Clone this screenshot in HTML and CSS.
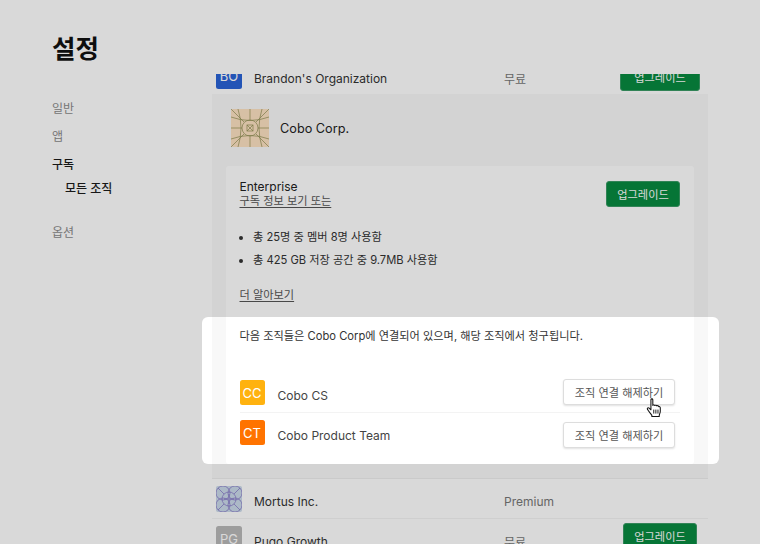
FILE: index.html
```html
<!DOCTYPE html>
<html lang="ko">
<head>
<meta charset="utf-8">
<title>설정</title>
<link rel="stylesheet" href="styles.css">
</head>
<body>
<div class="page">
  <aside class="sidebar">
    <h1 class="title">설정</h1>
    <nav class="nav">
      <a class="nav-item">일반</a>
      <a class="nav-item">앱</a>
      <a class="nav-item active">구독</a>
      <a class="nav-sub">모든 조직</a>
      <a class="nav-item options">옵션</a>
    </nav>
  </aside>
  <main class="viewport">
    <div class="list">
      <div class="row first">
        <span class="avatar blue">BO</span>
        <span class="row-name">Brandon's Organization</span>
        <span class="row-plan">무료</span>
        <button class="btn-green wide">업그레이드</button>
      </div>
      <section class="panel">
        <header class="panel-head">
          <svg class="logo-lg" viewBox="0 0 38 38">
            <rect width="38" height="38" rx="2" fill="#fde2c2"/>
            <g fill="none" stroke="#8f8f55" stroke-width=".7">
              <path d="M19 0V11M19 27V38M0 19H11M27 19H38"/>
              <path d="M0 0L13 13M38 0L25 13M0 38L13 25M38 38L25 25"/>
              <path d="M0 8Q19 15 38 8M0 30Q19 23 38 30M7 0Q13 19 7 38M31 0Q25 19 31 38"/>
              <circle cx="19" cy="19" r="8"/>
              <rect x="16" y="16" width="6" height="6"/>
              <path d="M16 16L22 22M22 16L16 22"/>
            </g>
          </svg>
          <span class="panel-name">Cobo Corp.</span>
        </header>
        <div class="card">
          <div class="plan-top">
            <div class="plan-info">
              <div class="plan-name">Enterprise</div>
              <a class="link">구독 정보 보기 또는</a>
            </div>
            <button class="btn-green">업그레이드</button>
          </div>
          <ul class="usage">
            <li>총 25명 중 멤버 8명 사용함</li>
            <li>총 425 GB 저장 공간 중 9.7MB 사용함</li>
          </ul>
          <a class="link more">더 알아보기</a>
          <p class="notice">다음 조직들은 Cobo Corp에 연결되어 있으며, 해당 조직에서 청구됩니다.</p>
          <div class="linked cc-row">
            <span class="avatar amber">CC</span>
            <span class="linked-name">Cobo CS</span>
            <button class="btn-plain">조직 연결 해제하기</button>
          </div>
          <div class="linked ct-row">
            <span class="avatar orange">CT</span>
            <span class="linked-name">Cobo Product Team</span>
            <button class="btn-plain">조직 연결 해제하기</button>
          </div>
        </div>
      </section>
      <div class="row mortus">
        <svg class="avatar-svg" viewBox="0 0 26 26">
          <rect width="26" height="26" rx="2" fill="#cbdaea"/>
          <g fill="none" stroke="#7f70c4" stroke-width=".7">
            <circle cx="7" cy="7" r="7"/><circle cx="19" cy="7" r="7"/>
            <circle cx="7" cy="19" r="7"/><circle cx="19" cy="19" r="7"/>
            <circle cx="13" cy="13" r="7"/>
            <path d="M2 2L8 8M24 2L18 8M2 24L8 18M24 24L18 18M13 8V18M8 13H18"/>
          </g>
        </svg>
        <span class="row-name">Mortus Inc.</span>
        <span class="row-plan">Premium</span>
      </div>
      <div class="row last">
        <span class="avatar grey">PG</span>
        <span class="row-name">Pugo Growth</span>
        <span class="row-plan">무료</span>
        <button class="btn-green">업그레이드</button>
      </div>
    </div>
  </main>
</div>
<div class="spotlight"></div>
<svg class="cursor" viewBox="0 0 16 19">
  <path d="M4.6 1.6C4.6.6 6.400.600 6.400 1.600V7C6.700 6.400 8 6.400 8.300 7.200C8.700 6.600 10 6.700 10.200 7.500C10.700 7 12 7.200 12.100 8.200C12.400 8 13.500 8.200 13.500 9.300V12.500C13.500 14 12.800 15 12.500 16.500V17.500H5.500V16.500C4.500 14.800 2.500 13 1.300 10.800C.700 9.600 2 8.800 3 9.700L4.600 11.200Z" fill="#fff" stroke="#111" stroke-width="1" stroke-linejoin="round"/>
  <path d="M7.300 11V14.800M9.300 11V14.800M11.300 11V14.800" stroke="#111" stroke-width=".9" fill="none"/>
</svg>
</body>
</html>
```
FILE: styles.css
```css
* { box-sizing: border-box; }
html, body { margin: 0; height: 544px; overflow: hidden; background: #fff; }
body {
  position: relative;
  font-family: Inter, "Noto Sans CJK KR", "Liberation Sans", sans-serif;
  font-size: 11.2px;
  color: #222;
}
.page { display: flex; height: 544px; }
.sidebar { width: 212px; padding: 32px 0 0 52px; flex: none; }
.title { margin: 0 0 35px; font-size: 25.500px; line-height: 34px; font-weight: 700; color: #111; }
.nav { display: flex; flex-direction: column; }
.nav-item { height: 28px; line-height: 16px; font-size: 12px; color: #8c8c8c; }
.nav-item.active { height: 24px; color: #1c1c1c; font-weight: 500; }
.nav-sub { height: 44px; line-height: 16px; font-size: 12px; padding-left: 13px; color: #1c1c1c; font-weight: 500; }
.viewport { margin-top: 74px; width: 496px; height: 470px; overflow: hidden; flex: none; }
.list { margin-top: -11px; }
.row { display: flex; align-items: center; padding-left: 4px; height: 40px; font-size: 12px; }
.row.first { height: 31px; align-items: flex-start; }
.row.first .row-name { margin-top: 8px; }
.row.first .row-plan { margin-top: 7px; }
.row.mortus { height: 40px; border-bottom: 1px solid #f4f4f4; }
.row.mortus .row-name, .row.mortus .row-plan { margin-top: 5px; }
.row.last { height: 50px; align-items: flex-start; padding-top: 7px; }
.row.last .row-name { margin-top: 8px; }
.row.last .row-plan { margin-top: 7px; width: 119px; }
.row.last .btn-green { margin-top: -3px; }
.row.first .btn-green { width: 80px; height: 28px; }
.avatar {
  width: 26px; height: 26px; flex: none; border-radius: 2.500px;
  display: flex; align-items: center; justify-content: center;
  color: #fff; font-size: 13px;
}
.avatar-svg { width: 26px; height: 26px; flex: none; }
.blue { background: #2a63d6; }
.grey { background: #b9b9b9; }
.amber { background: #ffb20f; }
.orange { background: #ff7300; }
.row-name { margin-left: 12px; width: 250px; color: #333; }
.row-plan { width: 116px; color: #777; }
.btn-green {
  width: 74px; height: 26px; padding: 0; border: 1px solid #3a9a66; border-radius: 3px;
  background: #088a40; color: #fff; font: inherit; font-size: 11.200px;
}
.panel { background: #f8f8f8; border-bottom: 1px solid #eee; padding: 0 14px 14px; height: 385px; }
.panel-head { display: flex; align-items: center; height: 72px; padding: 0 0 4px 5px; }
.logo-lg { width: 38px; height: 38px; flex: none; }
.panel-name { margin-left: 11px; font-size: 12.700px; color: #222; }
.card { background: #fff; border-radius: 3px; padding: 14px 14px 0 13.500px; height: 298px; }
.plan-top { display: flex; justify-content: space-between; align-items: flex-start; }
.plan-info { display: flex; flex-direction: column; }
.plan-name { font-size: 12px; line-height: 14px; color: #222; }
.link { font-size: 11.200px; line-height: 15px; color: #555; text-decoration: underline; text-underline-offset: 2px; }
.plan-top .btn-green { margin-top: 1px; }
.usage { margin: 17px 0 0; padding: 0 0 0 13.500px; color: #333; }
.usage li { height: 23px; line-height: 23px; }
.more { display: block; margin-top: 16px; width: max-content; }
.notice { margin: 24px 0 0; line-height: 18px; color: #333; }
.linked { display: flex; font-size: 12px; color: #444; }
.avatar.amber, .avatar.orange { width: 25px; height: 25px; }
.cc-row { margin-top: 35px; height: 33px; align-items: flex-start; border-bottom: 1px solid #f3f3f3; }
.ct-row { margin-top: 7px; align-items: flex-start; }
.linked-name { margin: 8px 0 0 13px; flex: 1; }
.btn-plain {
  width: 112px; height: 26px; margin-right: 5px; padding: 0; background: #fff; border: 1px solid #ddd; border-radius: 3px;
  box-shadow: 0 1px 2px rgba(0,0,0,.12); color: #555; font: inherit; font-size: 11.200px;
}
.cc-row .btn-plain { margin-top: -1px; }
.ct-row .btn-plain { margin-top: 2px; }
.spotlight {
  position: absolute; left: 202px; top: 317px; width: 517px; height: 147px; border-radius: 6px;
  box-shadow: 0 0 0 900px rgba(0,0,0,.15);
}
.cursor { position: absolute; left: 646px; top: 398px; width: 17px; height: 20px; }
```
